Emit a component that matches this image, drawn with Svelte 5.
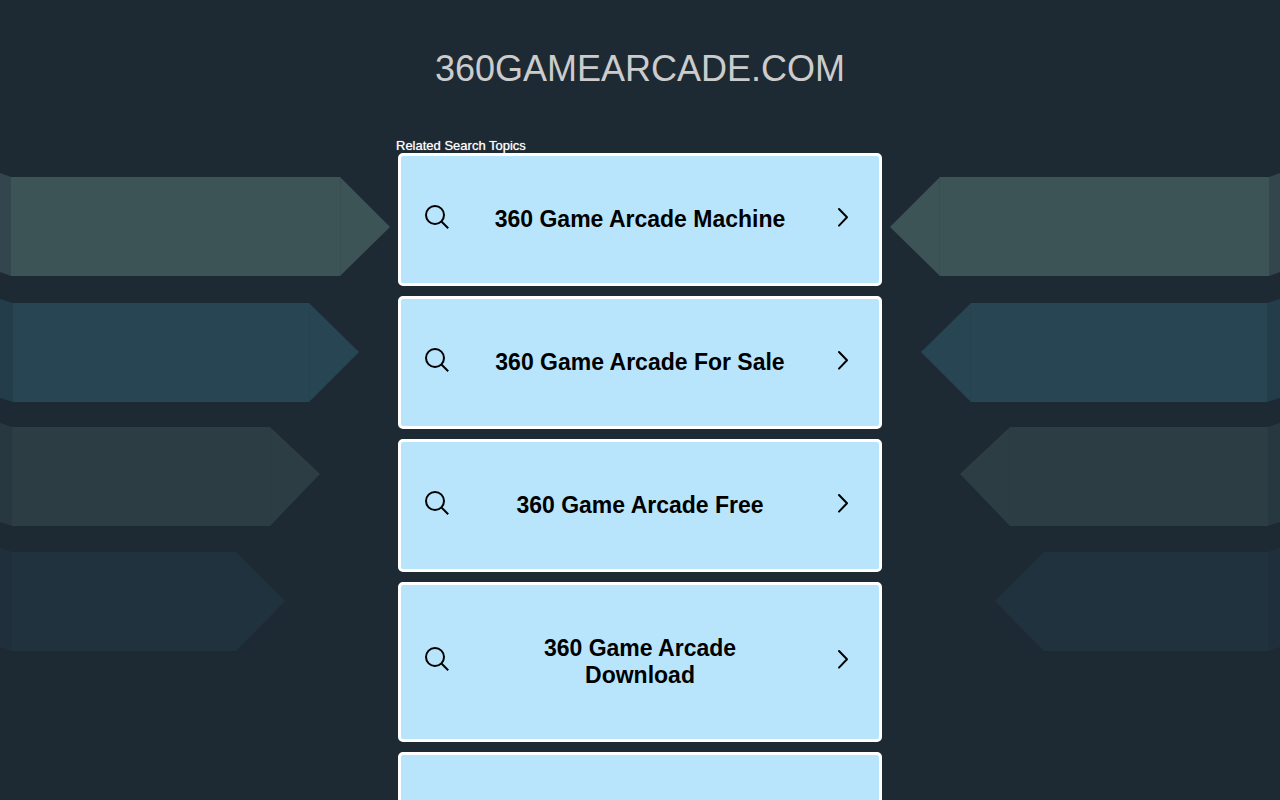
<script>
  const topics = [
    '360 Game Arcade Machine',
    '360 Game Arcade For Sale',
    '360 Game Arcade Free',
    '360 Game Arcade Download',
    ''
  ];

  const bands = [
    { top: 177, bottom: 276, edge: 11, neck: 340, tip: 390, mid: 227, face: '#3c5456', side: '#33464d' },
    { top: 303, bottom: 402, edge: 13, neck: 309, tip: 359, mid: 352, face: '#284553', side: '#243d4b' },
    { top: 427, bottom: 526, edge: 12, neck: 270, tip: 320, mid: 474, face: '#2c3e43', side: '#273840' },
    { top: 552, bottom: 651, edge: 12, neck: 236, tip: 285, mid: 601, face: '#20323e', side: '#1f303c' }
  ];
</script>

{#snippet ribbons()}
  {#each bands as b}
    <polygon
      points="{b.edge},{b.top} 0,{b.top - 4} 0,{b.bottom - 4} {b.edge},{b.bottom}"
      fill={b.side}
    />
    <polygon
      points="{b.edge},{b.top} {b.neck},{b.top} {b.tip},{b.mid} {b.neck},{b.bottom} {b.edge},{b.bottom}"
      fill={b.face}
    />
    <path d="M{b.neck + 0.5} {b.top + 1}V{b.bottom - 1}" stroke="#1e2a33" stroke-opacity="0.12" />
  {/each}
{/snippet}

<div class="page">
  <svg class="backdrop" viewBox="0 0 1280 800" preserveAspectRatio="xMidYMin slice" aria-hidden="true">
    <g>{@render ribbons()}</g>
    <g transform="translate(1280 0) scale(-1 1)">{@render ribbons()}</g>
  </svg>

  <header>
    <h1>360GAMEARCADE.COM</h1>
  </header>

  <main>
    <h2>Related Search Topics</h2>
    <nav>
      {#each topics as topic}
        <a href="#topic">
          <svg class="icon" viewBox="0 0 24 24" aria-hidden="true">
            <circle cx="10" cy="10" r="9" />
            <path d="M16.200 16.200L23.200 23.200" />
          </svg>
          <span>{topic}</span>
          <svg class="icon" viewBox="0 0 24 24" aria-hidden="true">
            <path d="M8 4L16 12.300L8 20.600" stroke-linecap="round" stroke-linejoin="round" />
          </svg>
        </a>
      {/each}
    </nav>
  </main>
</div>

<style>
  :global(body) {
    background: #1e2a33;
    font-family: "Liberation Sans", Arial, sans-serif;
  }

  .page {
    position: relative;
    min-height: 100vh;
    overflow: hidden;
  }

  .backdrop {
    position: absolute;
    top: 0;
    left: 0;
    width: 100%;
    pointer-events: none;
  }

  header,
  main {
    position: relative;
  }

  header {
    padding: 48px 16px 50px;
    text-align: center;
  }

  h1 {
    margin: 0;
    color: #ccc;
    font-size: 36px;
    font-weight: 400;
    line-height: 41px;
  }

  main {
    max-width: 488px;
    margin: 0 auto;
  }

  h2 {
    margin: 0;
    color: #fff;
    font-size: 13px;
    font-weight: 400;
    line-height: 14px;
    text-shadow: 0 0 1px rgba(255, 255, 255, 0.7);
  }

  nav {
    display: flex;
    flex-direction: column;
    gap: 10px;
    padding: 0 2px 10px;
  }

  a {
    box-sizing: border-box;
    display: grid;
    grid-template-columns: 24px minmax(0, 300px) 24px;
    justify-content: space-between;
    align-items: center;
    min-height: 132px;
    padding: 50px 24px;
    border: 3px solid #fff;
    border-radius: 5px;
    background: #b8e5fc;
    color: #000;
    font-size: 23px;
    font-weight: 700;
    line-height: 27px;
    text-align: center;
    text-decoration: none;
  }

  .icon {
    width: 24px;
    height: 24px;
    margin: -3px 0 3px;
    fill: none;
    stroke: #000;
    stroke-width: 2;
  }
</style>
